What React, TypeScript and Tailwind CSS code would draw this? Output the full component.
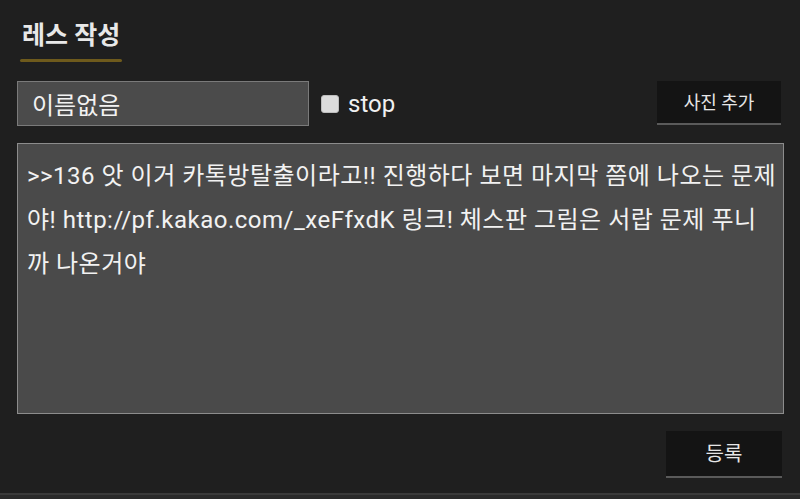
import React from "react";

const font = { fontFamily: 'Roboto, "Noto Sans CJK KR", sans-serif' };

export default function App() {
  return (
    <div
      className="w-[800px] h-[499px] bg-[#1f1f1f] text-[#eeeeee] flex flex-col overflow-hidden"
      style={font}
    >
      <div className="flex-1 flex flex-col px-[17px]">
        {/* heading */}
        <div className="pt-[20px] pl-[3px]">
          <div className="inline-flex flex-col">
            <h2 className="text-[25px] leading-[32px] font-bold text-[#e8e8e8] px-[2px]">레스 작성</h2>
            <div className="mt-[7px] h-[3px] bg-[#6e5a1c] rounded-full" />
          </div>
        </div>

        {/* name row */}
        <div className="mt-[19px] flex items-start">
          <input
            readOnly
            defaultValue="이름없음"
            className="w-[292px] h-[45px] bg-[#4b4b4b] border border-[#7a7a7a] px-[14px] text-[24px] text-[#f2f2f2] outline-none"
            style={font}
          />
          <label className="ml-[12px] mt-[11px] flex items-center gap-[9px]">
            <span className="w-[18px] h-[18px] rounded-[3px] bg-[#dcdcdc] border border-[#bdbdbd]" />
            <span className="text-[24px] leading-[24px] text-[#f0f0f0]">stop</span>
          </label>
          <button className="ml-auto mr-[2px] w-[124px] h-[44px] bg-[#141414] border-b-[2px] border-[#5a5a5a] text-[18px] text-[#e6e6e6]">
            사진 추가
          </button>
        </div>

        {/* body */}
        <textarea
          readOnly
          defaultValue=">>136 앗 이거 카톡방탈출이라고!! 진행하다 보면 마지막 쯤에 나오는 문제야! http://pf.kakao.com/_xeFfxdK 링크! 체스판 그림은 서랍 문제 푸니까 나온거야"
          className="mt-[17px] w-[767px] h-[271px] resize-none bg-[#4a4a4a] border border-[#8c8c8c] pl-[9px] pr-[6px] pt-[10px] text-[24px] leading-[44px] tracking-[0.5px] text-[#f2f2f2] outline-none"
          style={font}
        />

        {/* submit */}
        <div className="mt-[17px] flex justify-end pr-[1px]">
          <button className="w-[116px] h-[47px] bg-[#141414] border-b-[2px] border-[#5a5a5a] text-[20px] text-[#e6e6e6]">
            등록
          </button>
        </div>
      </div>
      <div className="h-[6px] border-t-[2px] border-[#3a3a3a] bg-[#2a2a2a]" />
    </div>
  );
}
